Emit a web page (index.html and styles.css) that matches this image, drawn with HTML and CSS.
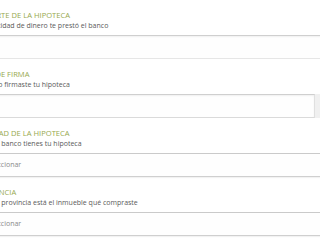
FILE: index.html
```html
<!DOCTYPE html>
<html lang="es">
<head>
<meta charset="utf-8">
<title>Hipoteca</title>
<link rel="stylesheet" href="styles.css">
</head>
<body>
<form class="form">
  <div class="field">
    <div class="label">IMPORTE DE LA HIPOTECA</div>
    <div class="hint">La cantidad de dinero te prestó el banco</div>
    <div class="control input"></div>
  </div>
  <div class="field">
    <div class="label">AÑO DE FIRMA</div>
    <div class="hint">Cuándo firmaste tu hipoteca</div>
    <div class="row">
      <div class="control input narrow"></div>
      <div class="side"></div>
    </div>
  </div>
  <div class="field">
    <div class="label">ENTIDAD DE LA HIPOTECA</div>
    <div class="hint">En qué banco tienes tu hipoteca</div>
    <div class="control select">Seleccionar</div>
  </div>
  <div class="field">
    <div class="label">PROVINCIA</div>
    <div class="hint">En qué provincia está el inmueble qué compraste</div>
    <div class="control select">Seleccionar</div>
  </div>
</form>
</body>
</html>
```
FILE: styles.css
```css
html, body {
  margin: 0;
  padding: 0;
  background: #ffffff;
  overflow: hidden;
}
body {
  width: 320px;
  height: 240px;
  font-family: "Open Sans", "Liberation Sans", sans-serif;
}
.form {
  margin-left: -23px;
  width: 360px;
  padding-top: 10px;
  display: flex;
  flex-direction: column;
  gap: 10px;
}
.field {
  display: flex;
  flex-direction: column;
}
.label {
  font-size: 7.6px;
  line-height: 11px;
  color: #97a94f;
  height: 11px;
}
.hint {
  font-size: 7px;
  line-height: 10px;
  color: #5a5a5a;
  height: 10px;
}
.control {
  margin-top: 4px;
  height: 24px;
  box-sizing: border-box;
  background: #fefefe;
  border-top: 1px solid #cfcfcf;
  border-bottom: 1px solid #e6e6e6;
  border-left: 1px solid #e0e0e0;
  box-shadow: inset 0 1px 2px rgba(0,0,0,0.06);
}
.row {
  display: flex;
  margin-top: 4px;
}
.row .control {
  margin-top: 0;
}
.narrow {
  width: 338px;
  flex: none;
  border-right: 1px solid #e0e0e0;
  border-bottom-color: #dadada;
}
.side {
  flex: 1;
  height: 24px;
  background: #f0f0f0;
}
.select {
  font-size: 7px;
  line-height: 22px;
  color: #8a8a8a;
  padding-left: 6px;
  background: #fefefe;
  border-top: 1px solid #cacaca;
  border-bottom: 1px solid #cfcfcf;
  box-shadow: 0 1px 1px rgba(0,0,0,0.05);
}
```
